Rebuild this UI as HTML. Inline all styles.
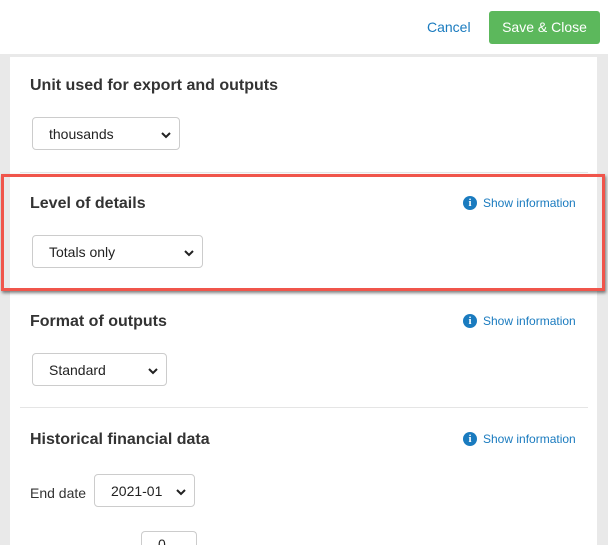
<!DOCTYPE html>
<html style="width:608px;height:545px;overflow:hidden"><head><style>
*{box-sizing:border-box;margin:0;padding:0}
body{width:608px;height:545px;overflow:hidden;background:#e9e9e9;font-family:"Liberation Sans",Arial,sans-serif;position:relative}
.top{position:absolute;left:0;top:0;width:608px;height:54px;background:#fff}
.cancel{position:absolute;left:427px;top:19px;font-size:14px;color:#1a7bbf}
.save{position:absolute;left:489px;top:11px;width:111px;height:33px;background:#5cb85c;border-radius:3px;color:#fff;font-size:14px;text-align:center;line-height:33px}
.panel{position:absolute;left:10px;top:57px;width:587px;height:488px;background:#fff}
h3{position:absolute;left:30px;font-size:16px;font-weight:bold;color:#333}
.sel{position:absolute;height:33px;border:1px solid #ccc;border-radius:4px;background:#fff;font-size:14px;color:#222;line-height:33px;padding-left:16px}
.sel svg{position:absolute;right:8px;top:13px}
.hr{position:absolute;left:20px;width:568px;height:1px;background:#e5e5e5}
.info{position:absolute;left:463px;height:16px;display:flex;align-items:center;font-size:12px;color:#1a7bbf}
.info i{display:block;width:14px;height:14px;border-radius:50%;background:#1a7bbf;color:#fff;font-style:normal;font-weight:bold;font-size:11px;text-align:center;line-height:14px;margin-right:6px;font-family:"Liberation Serif",serif}
.red{position:absolute;left:1px;top:174px;width:604px;height:117px;border:3px solid #f0554b;box-shadow:1px 2px 3px rgba(0,0,0,.5)}
</style></head><body>
<div class="top"></div>
<div class="cancel">Cancel</div>
<div class="save">Save &amp; Close</div>
<div class="panel"></div>
<h3 style="top:77px">Unit used for export and outputs</h3>
<div class="sel" style="left:32px;top:117px;width:148px">thousands<svg width="10" height="8"><path d="M1 2l4 4 4-4" stroke="#222" stroke-width="2" fill="none"/></svg></div>
<div class="hr" style="top:172px"></div>
<div class="red"></div>
<h3 style="top:195px">Level of details</h3>
<div class="info" style="top:195px"><i>i</i>Show information</div>
<div class="sel" style="left:32px;top:235px;width:171px">Totals only<svg width="10" height="8"><path d="M1 2l4 4 4-4" stroke="#222" stroke-width="2" fill="none"/></svg></div>
<h3 style="top:313px">Format of outputs</h3>
<div class="info" style="top:313px"><i>i</i>Show information</div>
<div class="sel" style="left:32px;top:353px;width:135px">Standard<svg width="10" height="8"><path d="M1 2l4 4 4-4" stroke="#222" stroke-width="2" fill="none"/></svg></div>
<div class="hr" style="top:407px"></div>
<h3 style="top:431px">Historical financial data</h3>
<div class="info" style="top:431px"><i>i</i>Show information</div>
<div style="position:absolute;left:30px;top:485px;font-size:14px;color:#333">End date</div>
<div class="sel" style="left:94px;top:474px;width:101px">2021-01<svg width="10" height="8"><path d="M1 2l4 4 4-4" stroke="#222" stroke-width="2" fill="none"/></svg></div>
<div class="sel" style="left:141px;top:531px;width:56px;height:14px;border-bottom:none;border-radius:4px 4px 0 0;line-height:24px;overflow:hidden">0</div>
</body></html>
